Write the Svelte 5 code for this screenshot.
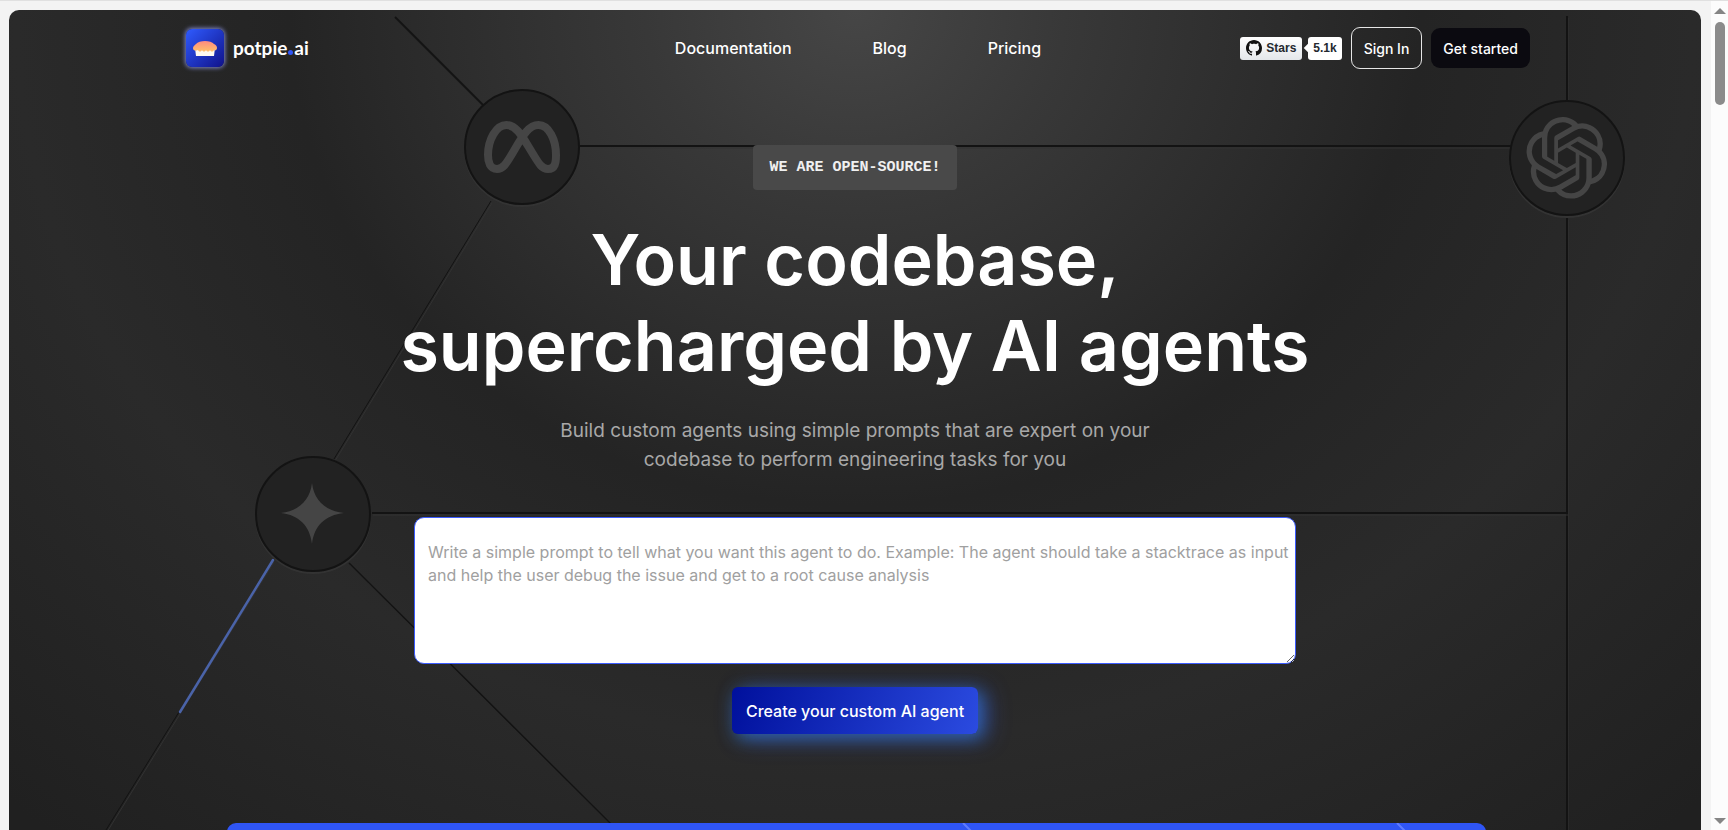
<script>
  const navLinks = [
    { label: 'Documentation', href: '#docs' },
    { label: 'Blog', href: '#blog' },
    { label: 'Pricing', href: '#pricing' }
  ];

  // lines that connect the model nodes in the backdrop
  const wires = [
    { d: 'M386 7 L474 95', width: 2 },
    { d: 'M570 136 H1502', width: 2 },
    { d: 'M1558 6 V90', width: 2 },
    { d: 'M1558 208 V820', width: 2 },
    { d: 'M482 191 L325 449', width: 1 },
    { d: 'M363 503 H1558', width: 2 },
    { d: 'M264 550 L97 820', width: 1 },
    { d: 'M340 553 L602 814', width: 1.5 }
  ];

  const nodes = [
    { name: 'meta', x: 513, y: 137 },
    { name: 'openai', x: 1558, y: 148 },
    { name: 'gemini', x: 304, y: 504 }
  ];

  let prompt = '';
</script>

<div class="page">
  <main class="hero">
    <svg class="backdrop" viewBox="0 0 1692 820" preserveAspectRatio="xMidYMin slice" aria-hidden="true">
      {#each wires as wire}
        <path d={wire.d} class="wire-light" transform="translate(1 2)" />
        <path d={wire.d} class="wire" stroke-width={wire.width} />
      {/each}
      <path d="M264 550 L171 702" class="wire-active" />

      {#each nodes as node (node.name)}
        <g transform="translate({node.x} {node.y})">
          <circle r="57" cy="2" class="node-light" />
          <circle r="57" class="node" />
          {#if node.name === 'meta'}
            <path
              class="meta"
              d="M-25 22 C-32 22 -34 15 -34 8 C-34 -7 -26 -22 -15.500 -22 C-5 -22 1 -9 11 7 C17 17 20 22 26 22 C33 22 34 16 34 8 C34 -7 27 -22 16.500 -22 C6 -22 0 -10 -10 7 C-16 17 -19 22 -25 22 Z"
            />
          {:else if node.name === 'openai'}
            <path
              class="glyph"
              transform="translate(-41 -41) scale(3.4)"
              d="M22.2819 9.8211a5.9847 5.9847 0 0 0-.5157-4.9108 6.0462 6.0462 0 0 0-6.5098-2.9A6.0651 6.0651 0 0 0 4.9807 4.1818a5.9847 5.9847 0 0 0-3.9977 2.9 6.0462 6.0462 0 0 0 .7427 7.0966 5.98 5.98 0 0 0 .511 4.9107 6.051 6.051 0 0 0 6.5146 2.9001A5.9847 5.9847 0 0 0 13.2599 24a6.0557 6.0557 0 0 0 5.7718-4.2058 5.9894 5.9894 0 0 0 3.9977-2.9001 6.0557 6.0557 0 0 0-.7475-7.0729zm-9.022 12.6081a4.4755 4.4755 0 0 1-2.8764-1.0408l.1419-.0804 4.7783-2.7582a.7948.7948 0 0 0 .3927-.6813v-6.7369l2.02 1.1686a.071.071 0 0 1 .038.052v5.5826a4.504 4.504 0 0 1-4.4945 4.4944zm-9.6607-4.1254a4.4708 4.4708 0 0 1-.5346-3.0137l.142.0852 4.783 2.7582a.7712.7712 0 0 0 .7806 0l5.8428-3.3685v2.3324a.0804.0804 0 0 1-.0332.0615L9.74 19.9502a4.4992 4.4992 0 0 1-6.1408-1.6464zM2.3408 7.8956a4.485 4.485 0 0 1 2.3655-1.9728V11.6a.7664.7664 0 0 0 .3879.6765l5.8144 3.3543-2.0201 1.1685a.0757.0757 0 0 1-.071 0l-4.8303-2.7865A4.504 4.504 0 0 1 2.3408 7.872zm16.5963 3.8558L13.1038 8.364 15.1192 7.2a.0757.0757 0 0 1 .071 0l4.8303 2.7913a4.4944 4.4944 0 0 1-.6765 8.1042v-5.6772a.79.79 0 0 0-.407-.667zm2.0107-3.0231l-.142-.0852-4.7735-2.7818a.7759.7759 0 0 0-.7854 0L9.409 9.2297V6.8974a.0662.0662 0 0 1 .0284-.0615l4.8303-2.7866a4.4992 4.4992 0 0 1 6.6802 4.66zM8.3065 12.863l-2.02-1.1638a.0804.0804 0 0 1-.038-.0567V6.0742a4.4992 4.4992 0 0 1 7.3757-3.4537l-.142.0805L8.704 5.459a.7948.7948 0 0 0-.3927.6813zm1.0976-2.3654l2.602-1.4998 2.6069 1.4998v2.9994l-2.5974 1.4997-2.6067-1.4997Z"
            />
          {:else}
            <path class="glyph" d="M-1 -31 C1 -14 12 -3 31 -1 C12 1 1 12 -1 30 C-3 12 -14 1 -32 -1 C-14 -3 -3 -14 -1 -31 Z" />
          {/if}
        </g>
      {/each}
    </svg>

    <header>
      <a class="brand" href="#home">
        <span class="logo">
          <svg viewBox="0 0 38 38" width="38" height="38" aria-hidden="true">
            <defs>
              <linearGradient id="crust" x1="0" y1="0" x2="0" y2="1">
                <stop offset="0" stop-color="#ff8a80" />
                <stop offset="1" stop-color="#ffc06a" />
              </linearGradient>
            </defs>
            <path d="M9 19 H29 L28 27 H10 Z" fill="#fffaf0" />
            <path
              d="M7 19 C7 17 9 16 10 15 C13 11 25 11 28 15 C30 16 31 17 31 19 C31 21 29 22 28 21 C27 23 25 23 24 21 C23 23 21 23 20 21 C19 23 17 23 16 21 C15 23 13 23 12 21 C10 22 7 22 7 19 Z"
              fill="url(#crust)"
            />
          </svg>
        </span>
        <span class="brand-name">potpie<span class="dot"></span>ai</span>
      </a>

      <nav>
        {#each navLinks as link}
          <a href={link.href}>{link.label}</a>
        {/each}
      </nav>

      <div class="actions">
        <a class="stars" href="#github">
          <span class="stars-label">
            <svg viewBox="0 0 16 16" width="16" height="16" aria-hidden="true">
              <path
                fill="#111"
                d="M8 0C3.58 0 0 3.58 0 8c0 3.54 2.29 6.53 5.47 7.59.4.07.55-.17.55-.38 0-.19-.01-.82-.01-1.49-2.01.37-2.53-.49-2.69-.94-.09-.23-.48-.94-.82-1.13-.28-.15-.68-.52-.01-.53.63-.01 1.08.58 1.23.82.72 1.21 1.87.87 2.33.66.07-.52.28-.87.51-1.07-1.78-.2-3.64-.89-3.64-3.95 0-.87.31-1.59.82-2.15-.08-.2-.36-1.02.08-2.12 0 0 .67-.21 2.2.82.64-.18 1.32-.27 2-.27s1.36.09 2 .27c1.53-1.04 2.2-.82 2.2-.82.44 1.1.16 1.92.08 2.12.51.56.82 1.27.82 2.15 0 3.07-1.87 3.75-3.65 3.95.29.25.54.73.54 1.48 0 1.07-.01 1.93-.01 2.2 0 .21.15.46.55.38A8.01 8.01 0 0 0 16 8c0-4.42-3.58-8-8-8z"
              />
            </svg>
            Stars
          </span>
          <span class="stars-count">5.1k</span>
        </a>
        <button class="sign-in" type="button">Sign In</button>
        <button class="get-started" type="button">Get started</button>
      </div>
    </header>

    <section class="intro">
      <p class="badge">WE ARE OPEN-SOURCE!</p>
      <h1>Your codebase,<br />supercharged by AI agents</h1>
      <p class="subtitle">
        Build custom agents using simple prompts that are expert on your<br />codebase to perform engineering tasks for you
      </p>
      <form on:submit|preventDefault>
        <textarea
          aria-label="Agent prompt"
          bind:value={prompt}
          placeholder="Write a simple prompt to tell what you want this agent to do. Example: The agent should take a stacktrace as input and help the user debug the issue and get to a root cause analysis"
        ></textarea>
        <button class="create" type="submit">Create your custom AI agent</button>
      </form>
    </section>

    <div class="preview">
      <svg viewBox="0 0 1259 40" preserveAspectRatio="xMidYMin slice" aria-hidden="true">
        <path d="M736 0 L776 40 M1170 0 L1210 40" stroke="#5f7cff" stroke-width="2" />
      </svg>
    </div>
  </main>

  <div class="scrollbar" aria-hidden="true">
    <svg viewBox="0 0 12 6" width="12" height="6"><path d="M0 6 L6 0 L12 6 Z" fill="#858585" /></svg>
    <div class="thumb"></div>
    <svg viewBox="0 0 12 6" width="12" height="6"><path d="M0 0 L6 6 L12 0 Z" fill="#858585" /></svg>
  </div>
</div>

<style>
  :global(body) {
    margin: 0;
    background: #f3f3f3;
    font-family: Inter, 'Open Sans', sans-serif;
  }

  .page {
    display: flex;
    gap: 10px;
    height: 100vh;
    overflow: hidden;
    box-sizing: border-box;
    padding-left: 9px;
    border-top: 1px solid #e0e0e0;
  }

  .hero {
    position: relative;
    flex: 1;
    display: flex;
    flex-direction: column;
    margin-top: 9px;
    overflow: hidden;
    border-radius: 10px 10px 0 0;
    background: radial-gradient(62% 112% at 50% 0, #464646 0, #383838 20%, #242424 54%, #2a2a2a 80%, #202020 118%);
    color: #fff;
  }

  .backdrop {
    position: absolute;
    inset: 0;
    width: 100%;
    height: 100%;
    fill: none;
  }

  .wire {
    stroke: #131313;
  }

  .wire-light {
    stroke: #323232;
    stroke-width: 1;
  }

  .wire-active {
    stroke: #4a63a8;
    stroke-width: 2.5;
    stroke-linecap: round;
  }

  .node {
    fill: #222;
    stroke: #131313;
    stroke-width: 2;
  }

  .node-light {
    stroke: #333;
    stroke-width: 2;
  }

  .glyph {
    fill: #454545;
  }

  .meta {
    stroke: #454545;
    stroke-width: 8;
  }

  header {
    position: relative;
    display: grid;
    grid-template-columns: 1fr auto 1fr;
    flex-shrink: 0;
    align-items: center;
    height: 76px;
    padding: 0 171px 0 177px;
  }

  a {
    color: inherit;
    text-decoration: none;
  }

  .brand {
    display: flex;
    align-items: center;
    gap: 9px;
  }

  .logo {
    display: flex;
    border-radius: 6px;
    background: linear-gradient(135deg, #2f5bff, #10128a);
    box-shadow: 0 0 4px 1px #7f86c8;
  }

  .brand-name {
    font: 700 19px/22px Lato, sans-serif;
  }

  .dot {
    display: inline-block;
    width: 5px;
    height: 5px;
    margin: 0 1px;
    border-radius: 50%;
    background: #2f55f5;
  }

  nav {
    display: flex;
    gap: 81px;
    font-size: 16px;
    font-weight: 500;
  }

  .actions {
    display: flex;
    align-items: center;
    justify-content: flex-end;
    gap: 9px;
  }

  .stars {
    display: flex;
    gap: 6px;
    color: #24292f;
    font: 700 12px/23px 'Liberation Sans', Arial, sans-serif;
  }

  .stars-label,
  .stars-count {
    display: flex;
    align-items: center;
    border-radius: 3px;
    background: #fff;
  }

  .stars-label {
    gap: 4px;
    padding: 0 6px;
    background: linear-gradient(#fff, #e4e7ea);
  }

  .stars-count {
    position: relative;
    padding: 0 5px;
  }

  .stars-count::before {
    content: '';
    position: absolute;
    left: -3px;
    top: 8px;
    width: 6px;
    height: 6px;
    background: #fff;
    transform: rotate(45deg);
  }

  button {
    border: 0;
    color: #fff;
    font-family: inherit;
    font-weight: 500;
    cursor: pointer;
  }

  .sign-in,
  .get-started {
    height: 40px;
    padding: 0 12px;
    border-radius: 9px;
    font-size: 14px;
  }

  .sign-in {
    height: 42px;
    border: 1px solid #e6e6e6;
    background: transparent;
  }

  .get-started {
    background: #0b0a10;
  }

  .intro {
    position: relative;
    display: flex;
    flex-direction: column;
    align-items: center;
    padding: 59px 24px 0;
    text-align: center;
  }

  .badge {
    margin: 0 0 27px;
    padding: 0 16px;
    border-radius: 4px;
    background: #494949;
    color: #f0f0f0;
    font: 700 15px/45px 'Liberation Mono', monospace;
  }

  h1 {
    margin: 0 0 27px;
    font-size: 70px;
    font-weight: 600;
    line-height: 86px;
  }

  .subtitle {
    margin: 0 0 43px;
    color: #a8a8a8;
    font-size: 19px;
    line-height: 29px;
  }

  form {
    display: flex;
    flex-direction: column;
    align-items: center;
    gap: 23px;
    width: 100%;
  }

  textarea {
    box-sizing: border-box;
    width: 100%;
    max-width: 882px;
    height: 147px;
    padding: 23px 0 23px 13px;
    border: 1px solid #3b5bff;
    border-radius: 10px;
    outline: 0;
    background: #fff;
    color: #222;
    font: 400 16px/23px Inter, sans-serif;
    resize: both;
  }

  textarea::placeholder {
    color: #a0a0a0;
  }

  .create {
    height: 47px;
    padding: 0 14px;
    border-radius: 6px;
    background: linear-gradient(110deg, #00109c, #2b4be0);
    box-shadow: 8px 4px 24px rgba(59, 91, 255, 0.45), 4px 4px 16px rgba(40, 140, 210, 0.55);
    font-size: 16px;
  }

  .preview {
    position: relative;
    flex: 0 0 40px;
    margin: 89px 215px 0 218px;
    overflow: hidden;
    border-radius: 9px 9px 0 0;
    background: #2f55f5;
  }

  .preview svg {
    display: block;
    width: 100%;
  }

  .scrollbar {
    display: flex;
    flex-direction: column;
    align-items: center;
    width: 17px;
    box-sizing: border-box;
    padding: 7px 0 6px;
    background: #fcfcfc;
  }

  .thumb {
    width: 10px;
    height: 83px;
    margin: 8px 0 auto;
    border-radius: 5px;
    background: #8b8b8b;
  }
</style>
